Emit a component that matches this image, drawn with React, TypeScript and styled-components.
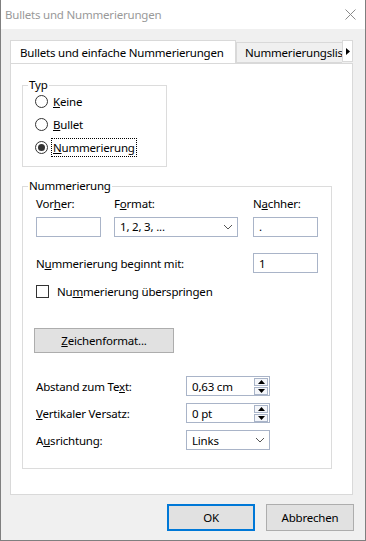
import styled, { createGlobalStyle } from "styled-components";

const GlobalStyle = createGlobalStyle`
  body {
    margin: 0;
    background: #ffffff;
    font-family: "Noto Sans", "Segoe UI", sans-serif;
    font-size: 11.5px;
    letter-spacing: -0.2px;
    color: #000;
  }
  * { box-sizing: border-box; }
`;

const Window = styled.div`
  width: 366px;
  height: 541px;
  border: 1px solid #7f7f7f;
  border-top: none;
  background: #f0f0f0;
  display: flex;
  flex-direction: column;
`;

const TitleBar = styled.div`
  height: 29px;
  background: #fff;
  display: flex;
  align-items: center;
  justify-content: space-between;
  padding: 0 9px 0 4px;
`;

const Title = styled.span`
  color: #999999;
`;

const Body = styled.div`
  flex: 1;
  padding: 11px 11px 0 9px;
  display: flex;
  flex-direction: column;
`;

const TabRow = styled.div`
  display: flex;
  align-items: flex-end;
  height: 23px;
  width: 343px;
`;

const TabStrip = styled.div`
  display: flex;
  align-items: flex-end;
  width: 332px;
  height: 23px;
  overflow: hidden;
`;

const Tab = styled.div<{ $active?: boolean }>`
  flex-shrink: 0;
  height: ${(p) => (p.$active ? "24px" : "21px")};
  padding: 0 ${(p) => (p.$active ? "9px" : "8px")};
  display: flex;
  align-items: center;
  white-space: nowrap;
  background: ${(p) => (p.$active ? "#fff" : "#f0f0f0")};
  border: 1px solid #d9d9d9;
  border-bottom: ${(p) => (p.$active ? "none" : "1px solid #d9d9d9")};
  margin-bottom: ${(p) => (p.$active ? "-1px" : "0")};
  position: relative;
  z-index: ${(p) => (p.$active ? 1 : 0)};
  width: ${(p) => (p.$active ? "226px" : "auto")};
`;

const ScrollArrow = styled.div`
  width: 11px;
  height: 22px;
  margin-bottom: 1px;
  background: #fff;
  border: 1px solid #d9d9d9;
  display: flex;
  align-items: center;
  justify-content: center;
`;

const Panel = styled.div`
  width: 343px;
  height: 432px;
  background: #fff;
  border: 1px solid #d9d9d9;
  padding: 0 0 0 11px;
  display: flex;
  flex-direction: column;
`;

const GroupBox = styled.div<{ $width: number; $height: number; $top: number }>`
  position: relative;
  width: ${(p) => p.$width}px;
  height: ${(p) => p.$height}px;
  margin-top: ${(p) => p.$top}px;
  border: 1px solid #dcdcdc;
  display: flex;
  flex-direction: column;
`;

const GroupLabel = styled.span`
  position: absolute;
  top: -9px;
  left: 5px;
  padding: 0 1px;
  background: #fff;
  line-height: 16px;
`;

const RadioList = styled.div`
  display: flex;
  flex-direction: column;
  padding: 4px 0 0 12px;
`;

const RadioRow = styled.div`
  display: flex;
  align-items: center;
  height: 23px;
  gap: 5px;
`;

const RadioCircle = styled.span<{ $checked?: boolean }>`
  width: 13px;
  height: 13px;
  border-radius: 50%;
  border: 1px solid #333;
  background: #fff;
  display: flex;
  align-items: center;
  justify-content: center;
  &::after {
    content: "";
    width: 7px;
    height: 7px;
    border-radius: 50%;
    background: ${(p) => (p.$checked ? "#333" : "transparent")};
  }
`;

const FocusLabel = styled.span`
  border: 1px dotted #000;
  padding: 1px 1px;
  margin-left: -2px;
  line-height: 15px;
`;

const GroupContent = styled.div`
  padding: 9px 0 0 13px;
  display: flex;
  flex-direction: column;
`;

const FieldGrid = styled.div`
  display: grid;
  grid-template-columns: 78px 139px 65px;
  row-gap: 5px;
  line-height: 16px;
`;

const TextBox = styled.div<{ $width: number }>`
  width: ${(p) => p.$width}px;
  height: 20px;
  border: 1px solid #a9b4c8;
  background: #fff;
  display: flex;
  align-items: center;
  padding: 0 4px 0 5px;
`;

const ValueText = styled.span`
  flex: 1;
  white-space: nowrap;
`;

const Row = styled.div<{ $top: number }>`
  display: flex;
  align-items: center;
  justify-content: space-between;
  margin-top: ${(p) => p.$top}px;
  width: 282px;
`;

const CheckRow = styled.div`
  display: flex;
  align-items: center;
  gap: 8px;
  margin-top: 12px;
  height: 13px;
`;

const CheckBox = styled.span`
  width: 13px;
  height: 13px;
  border: 1px solid #333;
  background: #fff;
`;

const PushButton = styled.div<{ $width: number; $height: number; $default?: boolean }>`
  width: ${(p) => p.$width}px;
  height: ${(p) => p.$height}px;
  background: #e1e1e1;
  border: ${(p) => (p.$default ? "2px solid #0078d7" : "1px solid #adadad")};
  display: flex;
  align-items: center;
  justify-content: center;
`;

const FormatButtonWrap = styled.div`
  margin: 30px 0 0 -2px;
`;

const SpinList = styled.div`
  display: flex;
  flex-direction: column;
  gap: 7px;
  margin-top: 23px;
`;

const SpinRow = styled.div`
  display: grid;
  grid-template-columns: 150px 84px;
  align-items: center;
`;

const SpinButtons = styled.div`
  display: flex;
  flex-direction: column;
  margin-right: -3px;
`;

const SpinButton = styled.div`
  width: 14px;
  height: 8px;
  border: 1px solid #a9b4c8;
  background: #f4f6fa;
  display: flex;
  align-items: center;
  justify-content: center;
  & + & {
    margin-top: 1px;
  }
`;

const ButtonRow = styled.div`
  display: flex;
  justify-content: flex-end;
  gap: 11px;
  margin-top: 9px;
`;

const Chevron = () => (
  <svg width="10" height="6" viewBox="0 0 10 6">
    <path d="M1 1 L5 5 L9 1" fill="none" stroke="#555" strokeWidth="1" />
  </svg>
);

const Arrow = ({ up }: { up?: boolean }) => (
  <svg width="7" height="4" viewBox="0 0 7 4">
    <path d={up ? "M0 4 L3.5 0 L7 4 Z" : "M0 0 L3.5 4 L7 0 Z"} fill="#000" />
  </svg>
);

const Spin = ({ value }: { value: string }) => (
  <TextBox $width={84}>
    <ValueText>{value}</ValueText>
    <SpinButtons>
      <SpinButton>
        <Arrow up />
      </SpinButton>
      <SpinButton>
        <Arrow />
      </SpinButton>
    </SpinButtons>
  </TextBox>
);

export default function App() {
  return (
    <>
      <GlobalStyle />
      <Window>
        <TitleBar>
          <Title>Bullets und Nummerierungen</Title>
          <svg width="11" height="11" viewBox="0 0 11 11">
            <path d="M0.5 0.5 L10.5 10.5 M10.5 0.5 L0.5 10.5" stroke="#8a8a8a" strokeWidth="1" />
          </svg>
        </TitleBar>
        <Body>
          <TabRow>
            <TabStrip>
              <Tab $active>Bullets und einfache Nummerierungen</Tab>
              <Tab>Nummerierungsliste</Tab>
            </TabStrip>
            <ScrollArrow>
              <svg width="4" height="7" viewBox="0 0 4 7">
                <path d="M0 0 L4 3.5 L0 7 Z" fill="#000" />
              </svg>
            </ScrollArrow>
          </TabRow>
          <Panel>
            <GroupBox $width={145} $height={82} $top={21}>
              <GroupLabel>Typ</GroupLabel>
              <RadioList>
                <RadioRow>
                  <RadioCircle />
                  <span>
                    <u>K</u>eine
                  </span>
                </RadioRow>
                <RadioRow>
                  <RadioCircle />
                  <span>
                    <u>B</u>ullet
                  </span>
                </RadioRow>
                <RadioRow>
                  <RadioCircle $checked />
                  <FocusLabel>
                    <u>N</u>ummerierung
                  </FocusLabel>
                </RadioRow>
              </RadioList>
            </GroupBox>

            <GroupBox $width={310} $height={283} $top={19}>
              <GroupLabel>Nummerierung</GroupLabel>
              <GroupContent>
                <FieldGrid>
                  <span>
                    Vor<u>h</u>er:
                  </span>
                  <span>
                    F<u>o</u>rmat:
                  </span>
                  <span>
                    N<u>a</u>chher:
                  </span>
                  <TextBox $width={65} />
                  <TextBox $width={124}>
                    <ValueText>1, 2, 3, ...</ValueText>
                    <Chevron />
                  </TextBox>
                  <TextBox $width={65}>
                    <ValueText>.</ValueText>
                  </TextBox>
                </FieldGrid>

                <Row $top={16}>
                  <span>
                    N<u>u</u>mmerierung beginnt mit:
                  </span>
                  <TextBox $width={65}>
                    <ValueText>1</ValueText>
                  </TextBox>
                </Row>

                <CheckRow>
                  <CheckBox />
                  <span>
                    Nu<u>m</u>merierung überspringen
                  </span>
                </CheckRow>

                <FormatButtonWrap>
                  <PushButton $width={140} $height={25}>
                    <span>
                      <u>Z</u>eichenformat...
                    </span>
                  </PushButton>
                </FormatButtonWrap>

                <SpinList>
                  <SpinRow>
                    <span>
                      Abstand zum Te<u>x</u>t:
                    </span>
                    <Spin value="0,63 cm" />
                  </SpinRow>
                  <SpinRow>
                    <span>
                      <u>V</u>ertikaler Versatz:
                    </span>
                    <Spin value="0 pt" />
                  </SpinRow>
                  <SpinRow>
                    <span>
                      A<u>u</u>srichtung:
                    </span>
                    <TextBox $width={84}>
                      <ValueText>Links</ValueText>
                      <Chevron />
                    </TextBox>
                  </SpinRow>
                </SpinList>
              </GroupContent>
            </GroupBox>
          </Panel>
          <ButtonRow>
            <PushButton $width={88} $height={27} $default>
              OK
            </PushButton>
            <PushButton $width={88} $height={27}>
              Abbrechen
            </PushButton>
          </ButtonRow>
        </Body>
      </Window>
    </>
  );
}
